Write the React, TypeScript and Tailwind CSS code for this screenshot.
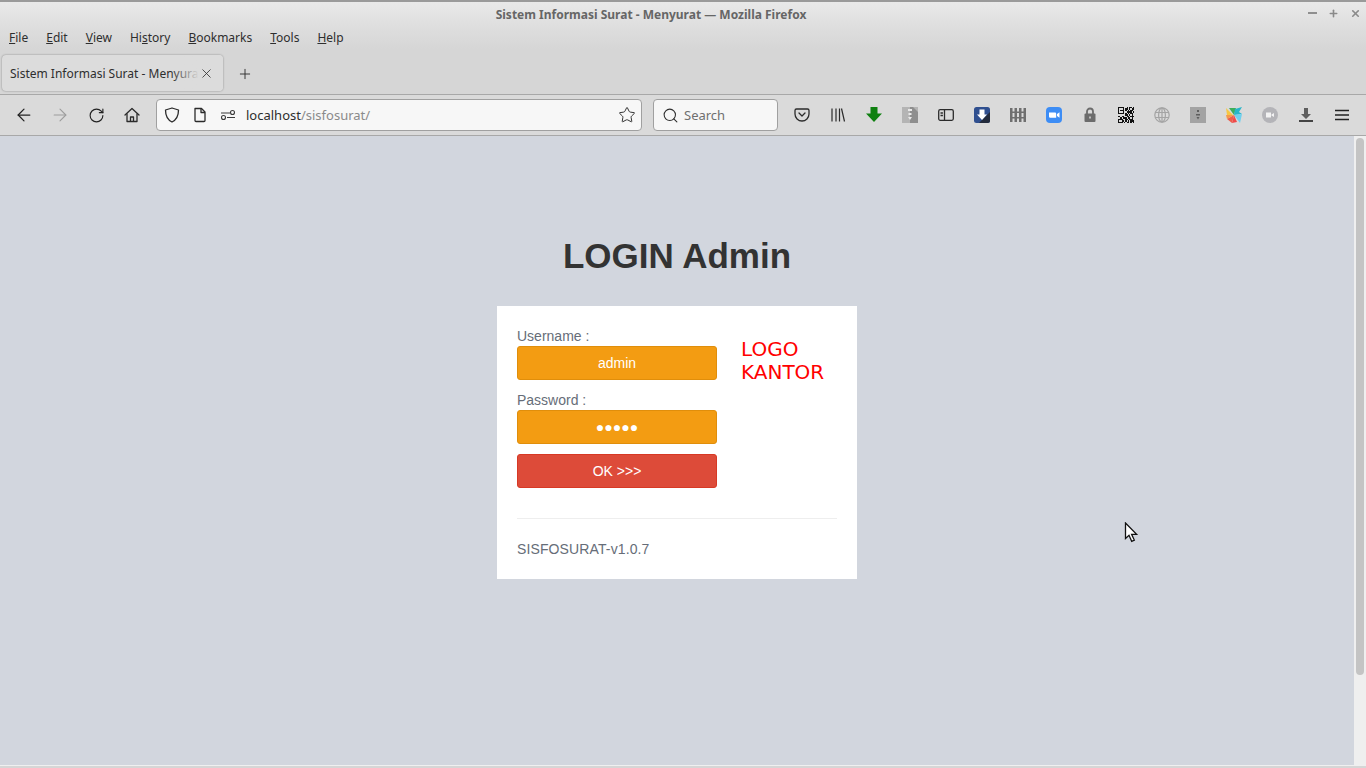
import { ArrowLeft, ArrowRight, Plus, RotateCw, Search, Star, X } from 'lucide-react'

const menus = [
  ['', 'F', 'ile'],
  ['', 'E', 'dit'],
  ['', 'V', 'iew'],
  ['Hi', 's', 'tory'],
  ['', 'B', 'ookmarks'],
  ['', 'T', 'ools'],
  ['', 'H', 'elp'],
]

const qrCells = [
  '1111100101101',
  '1000101101011',
  '1011101010110',
  '1000100111101',
  '1111101010110',
  '0000001101010',
  '1101100110111',
  '0010111011010',
  '1111001101110',
  '1001101010111',
  '1111010110101',
]

function ToolButton({ children }: { children: React.ReactNode }) {
  return <div className="flex h-9 w-9 shrink-0 items-center justify-center">{children}</div>
}

function HomeIcon() {
  return (
    <svg width="16" height="16" viewBox="0 0 16 16" fill="none" stroke="#2b2b2b" strokeWidth="1.300" strokeLinejoin="round">
      <path d="M1 8 8 1.500 15 8" strokeLinecap="round" />
      <path d="M3 6.500V14.500h10V6.500" />
      <path d="M6.500 14.500V10h3v4.500" />
    </svg>
  )
}

function ShieldIcon() {
  return (
    <svg width="16" height="16" viewBox="0 0 16 16" fill="none" stroke="#2b2b2b" strokeWidth="1.300" strokeLinejoin="round">
      <path d="M8 1 14.500 3c0 6-1.500 9.500-6.500 12C3 12.500 1.500 9 1.500 3Z" />
    </svg>
  )
}

function PageIcon() {
  return (
    <svg width="16" height="16" viewBox="0 0 16 16" fill="none" stroke="#2b2b2b" strokeWidth="1.300" strokeLinejoin="round">
      <path d="M3 1.500h6.500L13 5v8.500a1 1 0 0 1-1 1H4a1 1 0 0 1-1-1Z" />
      <path d="M9 1.500V5.500h4" />
    </svg>
  )
}

function PermissionsIcon() {
  return (
    <svg width="16" height="16" viewBox="0 0 16 16" fill="none" stroke="#3a3a3a" strokeWidth="1.100">
      <path d="M1 6h9M7 10.500h8" />
      <circle cx="12.500" cy="5.500" r="2" />
      <circle cx="3.500" cy="10.500" r="2" />
    </svg>
  )
}

function Pocket() {
  return (
    <svg width="16" height="16" viewBox="0 0 16 16" fill="none" stroke="#2b2b2b" strokeWidth="1.300">
      <path d="M2.500 2h11A1.500 1.500 0 0 1 15 3.500V7a7 7 0 0 1-14 0V3.500A1.500 1.500 0 0 1 2.500 2Z" />
      <path d="M5 6l3 3 3-3" strokeLinecap="round" strokeLinejoin="round" />
    </svg>
  )
}

function Library() {
  return (
    <svg width="16" height="16" viewBox="0 0 16 16" fill="none" stroke="#2b2b2b" strokeWidth="1.200">
      <path d="M2 1.500v13M6 1.500v13M9.500 1.500v13M11.500 1.500l3 13" />
    </svg>
  )
}

function GreenArrow() {
  return (
    <svg width="16" height="16" viewBox="0 0 16 16">
      <path d="M4.500 0h7v6.500H16L8 15 0 6.500h4.500Z" fill="#0f8010" />
    </svg>
  )
}

function ZipIcon({ dark }: { dark?: boolean }) {
  return (
    <svg width="16" height="16" viewBox="0 0 16 16">
      <rect width="16" height="16" fill={dark ? '#a3a3a3' : '#b4b4b4'} />
      {!dark && <path d="M8 0h3l5 5v11H8Z" fill="#8e8e8e" />}
      {dark ? (
        <path d="M7 3h2v2H7ZM6 7h4v1.500H6ZM6.500 10h3L8 12.500Z" fill="#5e5e5e" />
      ) : (
        <path d="M6 2h4v2H6ZM6.500 6h3v2h-3ZM6 10h4L8 13Z" fill="#e8e8e8" />
      )}
    </svg>
  )
}

function Sidebar() {
  return (
    <svg width="16" height="16" viewBox="0 0 16 16" fill="none" stroke="#2b2b2b" strokeWidth="1.300">
      <rect x="0.700" y="2.700" width="14.600" height="10.600" rx="1.500" />
      <path d="M6.500 3v10M2.500 6h2.400M2.500 8.500h2.400" />
    </svg>
  )
}

function DownloadBlue() {
  return (
    <svg width="16" height="16" viewBox="0 0 16 16">
      <rect width="16" height="16" rx="2.500" fill="#2f4f8f" />
      <path d="M16 5v8.500a2.500 2.500 0 0 1-2.500 2.500H5Z" fill="#232b3c" />
      <path d="M5.500 2.500h5v5H13L8 13 3 7.500h2.500Z" fill="#fff" />
    </svg>
  )
}

function Fence() {
  return (
    <svg width="16" height="16" viewBox="0 0 16 16" fill="#6f6f6f">
      <path d="M0 1h2.500v14H0ZM4.500 1H7v14H4.500ZM9 1h2.500v14H9ZM13.500 1H16v14h-2.500ZM0 4.500h16V6H0ZM0 10h16v1.500H0Z" />
    </svg>
  )
}

function Zoom() {
  return (
    <svg width="16" height="16" viewBox="0 0 16 16">
      <rect width="16" height="16" rx="4" fill="#3d8df5" />
      <path d="M3 5.500h6A1.200 1.200 0 0 1 10.200 6.700v4H4.200A1.200 1.200 0 0 1 3 9.500ZM11 7l2.500-1.800v5.600L11 9Z" fill="#fff" />
    </svg>
  )
}

function Lock() {
  return (
    <svg width="16" height="16" viewBox="0 0 16 16">
      <path d="M5 7V4.500a3 3 0 0 1 6 0V7" fill="none" stroke="#6c6c6c" strokeWidth="1.800" />
      <rect x="2.500" y="6.500" width="11" height="8.500" rx="1" fill="#6c6c6c" />
      <rect x="7" y="9.500" width="2" height="2" fill="#bdbdbd" />
    </svg>
  )
}

function QrCode() {
  return (
    <svg width="16" height="16" viewBox="0 0 13 11" preserveAspectRatio="none" shapeRendering="crispEdges">
      {qrCells.map((row, y) =>
        row.split('').map((cell, x) => (cell === '1' ? <rect key={`${x}-${y}`} x={x} y={y} width="1" height="1" fill="#111" /> : null)),
      )}
    </svg>
  )
}

function Globe() {
  return (
    <svg width="16" height="16" viewBox="0 0 16 16" fill="none" stroke="#a4a4a4" strokeWidth="1.200">
      <circle cx="8" cy="8" r="7.200" />
      <ellipse cx="8" cy="8" rx="3.400" ry="7.200" />
      <path d="M8 1v14M1.200 5.500h13.600M1.200 10.500h13.600" />
    </svg>
  )
}

function Pinwheel() {
  return (
    <svg width="16" height="16" viewBox="0 0 16 16">
      <path d="M0 1 7 8H1Z" fill="#f6c744" />
      <path d="M3 1h7L8 8Z" fill="#3fae5a" />
      <path d="M8 8 9 2l7-2-3 5 3 2Z" fill="#27b5c9" />
      <path d="M8 8l8-1-2 9Z" fill="#6fd0ee" />
      <path d="M8 8l3 7-5 1Z" fill="#ef4a4a" />
      <path d="M8 8 6 16 1 12Z" fill="#ee5b4c" />
      <path d="M8 8 1 12 0 8Z" fill="#f59a4a" />
    </svg>
  )
}

function VideoDot() {
  return (
    <svg width="16" height="16" viewBox="0 0 16 16">
      <circle cx="8" cy="8" r="8" fill="#b4b4b8" />
      <path d="M4 5.500h5v5H4ZM9.500 7.500l2.500-1.500v4l-2.500-1.500Z" fill="#f2f2f2" />
    </svg>
  )
}

function SaveDown() {
  return (
    <svg width="16" height="16" viewBox="0 0 16 16">
      <path d="M6 1h4v6h3l-5 5-5-5h3Z" fill="#5e5e5e" />
      <rect x="1" y="13" width="14" height="2" fill="#444" />
    </svg>
  )
}

function MenuIcon() {
  return (
    <svg width="16" height="16" viewBox="0 0 16 16" stroke="#222" strokeWidth="1.300">
      <path d="M1 3.500h14M1 8h14M1 12.500h14" />
    </svg>
  )
}

function Cursor() {
  return (
    <svg className="absolute left-[1124px] top-[522px]" width="15" height="21" viewBox="0 0 15 21">
      <path d="M1.500 1v15.500l3.500-3.200 2.700 6 2.600-1.200-2.700-5.800h5Z" fill="#fff" stroke="#111" strokeWidth="1.300" />
    </svg>
  )
}

export default function App() {
  return (
    <div className="relative flex h-screen w-screen flex-col overflow-hidden bg-[#d6d6d6] font-['Noto_Sans',sans-serif] text-[#2e2e2e]">
      {/* window title */}
      <div className="relative flex h-[27px] shrink-0 items-center justify-center border-t-2 border-[#9a9a9a] bg-gradient-to-b from-[#e9e9e9] to-[#dedede] pr-[64px] text-[12px] font-bold text-[#666]">
        Sistem Informasi Surat - Menyurat — Mozilla Firefox
        <div className="absolute right-[5px] top-[1px] flex h-5 items-center gap-[11px] text-[#8a8a8a]">
          <div className="h-[2px] w-[9px] bg-[#8f8f8f]" />
          <Plus size={11} strokeWidth={3.500} />
          <X size={11} strokeWidth={3.500} />
        </div>
      </div>

      {/* menu bar */}
      <div className="flex h-[22px] shrink-0 items-center gap-[18px] bg-gradient-to-b from-[#dedede] to-[#d6d6d6] pl-[9px] text-[12px]">
        {menus.map(([before, key, after]) => (
          <span key={before + key + after}>
            {before}
            <u>{key}</u>
            {after}
          </span>
        ))}
      </div>

      {/* tabs */}
      <div className="flex h-[46px] shrink-0 items-start border-b border-[#a8a8a8] bg-[#d6d6d6] pl-[2px] pt-[6px]">
        <div className="relative flex h-[36px] w-[221px] items-center overflow-hidden rounded-[4px] bg-[#dcdcdc] pl-2 text-[12px] shadow-[0_0_2px_rgba(0,0,0,0.4)]">
          <span className="whitespace-nowrap pt-[1px]">Sistem Informasi Surat - Menyurat</span>
          <div className="absolute inset-y-0 right-[24px] w-7 bg-gradient-to-r from-transparent to-[#dcdcdc]" />
          <div className="absolute inset-y-0 right-0 flex w-[24px] items-center bg-[#dcdcdc]">
            <X size={15} strokeWidth={1.300} />
          </div>
        </div>
        <div className="ml-[14px] flex h-[36px] w-4 items-center justify-center pt-[1px]">
          <Plus size={18} strokeWidth={1.400} />
        </div>
      </div>

      {/* toolbar */}
      <div className="flex h-[41px] shrink-0 items-center border-b border-[#a8a8a8] bg-[#dadada] pl-[6px]">
        <ToolButton><ArrowLeft size={20} strokeWidth={1.500} color="#222" /></ToolButton>
        <ToolButton><ArrowRight size={20} strokeWidth={1.300} color="#9c9c9c" /></ToolButton>
        <ToolButton><RotateCw size={17} strokeWidth={1.600} color="#222" /></ToolButton>
        <ToolButton><HomeIcon /></ToolButton>
        <div className="ml-[6px] flex h-[32px] w-[486px] shrink-0 items-center rounded-[4px] border border-[#a0a0a0] bg-[#f7f7f7] pl-[7px] pr-[5px] text-[13px]">
          <ShieldIcon />
          <div className="ml-[12px]"><PageIcon /></div>
          <div className="ml-[12px]"><PermissionsIcon /></div>
          <span className="ml-[10px] pt-[1px]">localhost<span className="text-[#8a8a8a]">/sisfosurat/</span></span>
          <Star size={18} strokeWidth={1.300} className="ml-auto" />
        </div>
        <div className="ml-[11px] flex h-[32px] w-[125px] shrink-0 items-center rounded-[4px] border border-[#a0a0a0] bg-[#f7f7f7] pl-[8px] text-[13px] text-[#6f6f6f]">
          <Search size={17} strokeWidth={1.500} color="#2e2e2e" />
          <span className="ml-[5px] pt-[1px]">Search</span>
        </div>
        <div className="ml-[6px] flex">
          <ToolButton><Pocket /></ToolButton>
          <ToolButton><Library /></ToolButton>
          <ToolButton><GreenArrow /></ToolButton>
          <ToolButton><ZipIcon /></ToolButton>
          <ToolButton><Sidebar /></ToolButton>
          <ToolButton><DownloadBlue /></ToolButton>
          <ToolButton><Fence /></ToolButton>
          <ToolButton><Zoom /></ToolButton>
          <ToolButton><Lock /></ToolButton>
          <ToolButton><QrCode /></ToolButton>
          <ToolButton><Globe /></ToolButton>
          <ToolButton><ZipIcon dark /></ToolButton>
          <ToolButton><Pinwheel /></ToolButton>
          <ToolButton><VideoDot /></ToolButton>
          <ToolButton><SaveDown /></ToolButton>
          <ToolButton><MenuIcon /></ToolButton>
        </div>
      </div>

      {/* page */}
      <div className="flex min-h-0 flex-1">
        <main className="flex-1 bg-[#d2d6de] pt-[95px] font-['Liberation_Sans',sans-serif] text-[14px] text-[#666d78]">
          <h1 className="mb-[25px] text-center text-[35px] font-bold leading-[50px] text-[#333]">LOGIN Admin</h1>
          <div className="mx-auto w-[360px] bg-white p-5">
            <div className="flex">
              <form className="flex w-[200px] flex-col">
                <label className="leading-5">Username :</label>
                <input readOnly value="admin" className="h-[34px] rounded-[3px] border border-[#e08e0b] bg-[#f39c12] text-center text-white outline-none" />
                <label className="mt-[10px] leading-5">Password :</label>
                <input readOnly value="●●●●●" className="h-[34px] rounded-[3px] border border-[#e08e0b] bg-[#f39c12] text-center text-white outline-none" />
                <button type="button" className="mt-[10px] h-[34px] rounded-[3px] border border-[#d73925] bg-[#dd4b39] text-white">OK &gt;&gt;&gt;</button>
              </form>
              <div className="ml-[24px] mt-[12px] font-['DejaVu_Sans',sans-serif] text-[20px] leading-[23px] text-[#ff0000]">LOGO<br />KANTOR</div>
            </div>
            <hr className="mt-[30px] border-[#eeeeee]" />
            <p className="mt-5 leading-5 tracking-[0.12px]">SISFOSURAT-v1.0.7</p>
          </div>
        </main>
        <div className="w-3 shrink-0 bg-[#efefef] pl-[2px] pt-[2px]">
          <div className="h-[537px] w-2 rounded-full bg-[#c4c4c4]" />
        </div>
      </div>
      <div className="h-[3px] shrink-0 border-t border-[#f0f0f0] bg-[#d6d6d6]" />
      <Cursor />
    </div>
  )
}
